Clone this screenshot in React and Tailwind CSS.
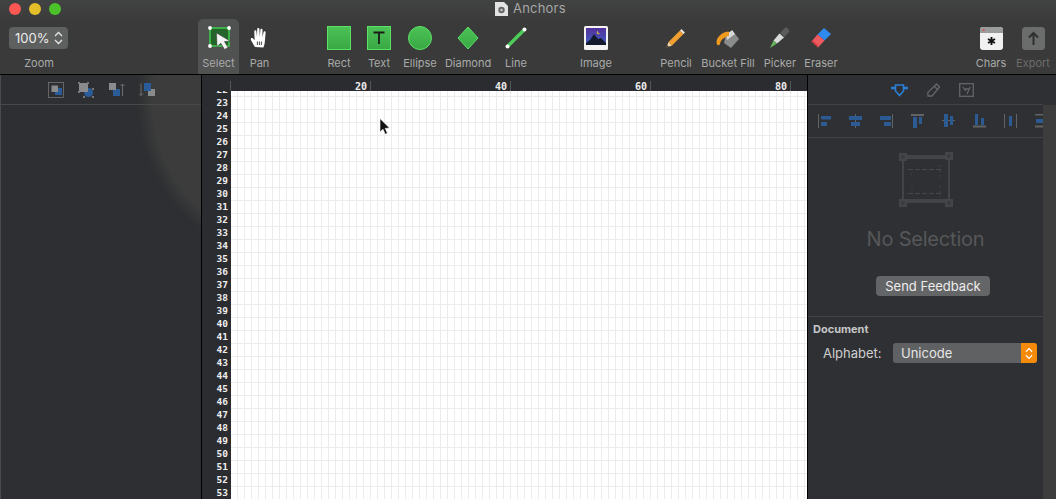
import React from "react";

const uiFont = "font-['Inter','Liberation_Sans',sans-serif]";
const monoFont = "font-['DejaVu_Sans_Mono',monospace]";

function Tool({ label, width, dim, active, children }) {
  return (
    <div className={`${width} h-[55px] shrink-0 flex flex-col items-center ${active ? "bg-[#505151] rounded-t-[5px]" : ""}`}>
      <div className="h-[38px] w-full flex items-center justify-center">{children}</div>
      <div className={`text-[11px] leading-[13px] whitespace-nowrap ${dim ? "text-[#6b6c6b]" : "text-[#a9aaa9]"}`}>{label}</div>
    </div>
  );
}

function SelectIcon() {
  return (
    <svg width="26" height="26" viewBox="0 0 26 26">
      <rect x="4" y="3" width="19" height="18" fill="#25652c" stroke="#3fc64c" strokeWidth="1.6" />
      <circle cx="4" cy="3" r="1.9" fill="#fff" />
      <circle cx="23" cy="3" r="1.9" fill="#fff" />
      <circle cx="4" cy="21" r="1.9" fill="#fff" />
      <path d="M10.5 8 L11 21.5 L14.8 18.2 L18.6 24.4 L22 22.4 L18.4 16.6 L24 16 Z" fill="#f4f4f4" stroke="#333" strokeWidth="0.5" />
    </svg>
  );
}

function HandIcon() {
  return (
    <svg width="20" height="22" viewBox="0 0 20 22">
      <path d="M5 20 C3.5 17.5 1.2 14 0.8 12.6 C0.4 11.3 2 10.4 3 11.4 L4.6 13.2 L4.3 4.4 C4.3 2.9 6.3 2.9 6.4 4.4 L7 10 L7.2 2 C7.2 0.5 9.4 0.5 9.4 2 L9.7 10 L10.4 2.8 C10.5 1.3 12.6 1.4 12.5 2.9 L12.4 10.4 L13.6 5 C13.9 3.7 15.8 4 15.6 5.4 L14.9 14 C14.7 16.5 14.4 18 13.4 20.5 Z" fill="#fff" />
      <path d="M7.4 14.5 V18 M9.4 14.5 V18 M11.4 14.5 V18" stroke="#333" strokeWidth="0.9" />
    </svg>
  );
}

function GreenFill({ id }) {
  return (
    <defs>
      <linearGradient id={id} x1="0" y1="0" x2="0" y2="1">
        <stop offset="0" stopColor="#4cc256" />
        <stop offset="1" stopColor="#38a844" />
      </linearGradient>
    </defs>
  );
}

function RectIcon() {
  return (
    <svg width="24" height="24" viewBox="0 0 24 24">
      <GreenFill id="green-rect" />
      <rect x="0.5" y="0.5" width="23" height="23" fill="url(#green-rect)" stroke="#5ce066" />
    </svg>
  );
}

function TextIcon() {
  return (
    <svg width="24" height="24" viewBox="0 0 24 24">
      <GreenFill id="green-text" />
      <rect x="0.5" y="0.5" width="23" height="23" fill="url(#green-text)" stroke="#5ce066" />
      <path d="M6.5 6.5 H17.5 M12 6.5 V18" stroke="#1b1b1b" strokeWidth="1.8" fill="none" />
    </svg>
  );
}

function EllipseIcon() {
  return (
    <svg width="24" height="24" viewBox="0 0 24 24">
      <GreenFill id="green-ellipse" />
      <circle cx="12" cy="12" r="11.5" fill="url(#green-ellipse)" stroke="#5ce066" />
    </svg>
  );
}

function DiamondIcon() {
  return (
    <svg width="22" height="24" viewBox="0 0 22 24">
      <GreenFill id="green-diamond" />
      <path d="M11 1 L21 12 L11 23 L1 12 Z" fill="url(#green-diamond)" stroke="#5ce066" strokeLinejoin="round" />
    </svg>
  );
}

function LineIcon() {
  return (
    <svg width="22" height="22" viewBox="0 0 22 22">
      <path d="M3 19 L19 3" stroke="#4ccc58" strokeWidth="3.4" />
      <circle cx="2.5" cy="19.5" r="2" fill="#fff" />
      <circle cx="19.5" cy="2.5" r="2" fill="#fff" />
    </svg>
  );
}

function ImageIcon() {
  return (
    <svg width="24" height="24" viewBox="0 0 24 24">
      <defs>
        <linearGradient id="night" x1="0" y1="0" x2="0" y2="1">
          <stop offset="0" stopColor="#53309a" />
          <stop offset="1" stopColor="#3f62c4" />
        </linearGradient>
      </defs>
      <rect width="24" height="24" rx="1.5" fill="#f4f4f4" />
      <rect x="2" y="2" width="20" height="17" fill="url(#night)" />
      <path d="M2 19 L2 17 L6 14 L10 8 L14 13 L17 12 L22 17 V19 Z" fill="#141a2e" />
      <path d="M14 5 A1.6 1.6 0 1 0 15.8 7.2 A1.8 1.8 0 0 1 14 5 Z" fill="#e3b440" />
    </svg>
  );
}

function PencilIcon() {
  return (
    <svg width="22" height="22" viewBox="0 0 22 22">
      <path d="M15 3.5 L18.5 7 L7 18.5 L3.5 15 Z" fill="#f0a030" />
      <path d="M15 3.5 L16.5 2 L20 5.5 L18.5 7 Z" fill="#ececec" />
      <path d="M16.5 2 L17.5 1 L21 4.5 L20 5.5 Z" fill="#444" />
      <path d="M3.5 15 L7 18.5 L1.5 20.5 Z" fill="#f2d2a0" />
      <path d="M1.5 20.5 L2.4 18.2 L3.8 19.4 Z" fill="#333" />
    </svg>
  );
}

function BucketIcon() {
  return (
    <svg width="24" height="22" viewBox="0 0 24 22">
      <path d="M10 7 L16 3 L23 12 L15 21 L8 16 Z" fill="#8a8b8b" />
      <path d="M10 7 L16 3 L19 7 L11 13 Z" fill="#d8d8d8" />
      <path d="M12 4 L18 2 L16 3 L10.5 7 Z" fill="#2a2a2a" />
      <path d="M13 4.5 C6 5 1 9.5 0.5 15 C0.5 19 3 19 4 17 C4.5 13 8 10 13 9 Z" fill="#ef9a1f" />
    </svg>
  );
}

function PickerIcon() {
  return (
    <svg width="22" height="22" viewBox="0 0 22 22">
      <path d="M16 0.8 C17.8 -0.2 21 3 20 5 L15.5 10 L11 6 Z" fill="#5a5b5c" />
      <path d="M10.5 6.5 L15 10.5 L8 16.5 L4.5 13.5 Z" fill="#d8dbda" />
      <path d="M4.5 13.5 L8 16.5 L1 21 Z" fill="#63b55a" />
    </svg>
  );
}

function EraserIcon() {
  return (
    <svg width="22" height="22" viewBox="0 0 22 22">
      <path d="M14 1 L21 7 L14.5 13.5 L7.5 7.5 Z" fill="#2f8af0" />
      <path d="M7.5 7.5 L14.5 13.5 L8 20.5 L1.5 14.5 Z" fill="#ef5a5e" />
      <path d="M1.5 14.5 L8 20.5 L8 18.5 L2 13 Z" fill="#c93a40" />
    </svg>
  );
}

function CharsIcon() {
  return (
    <svg width="23" height="23" viewBox="0 0 23 23">
      <rect width="23" height="23" rx="3" fill="#f1f1f1" />
      <path d="M0 3 a3 3 0 0 1 3 -3 h17 a3 3 0 0 1 3 3 v3 H0 Z" fill="#9a9b9b" />
      <circle cx="3.6" cy="3" r="1.1" fill="#d8504e" />
      <path d="M11.5 10 V18 M8 12 L15 16 M15 12 L8 16" stroke="#111" strokeWidth="1.9" />
    </svg>
  );
}

function ExportIcon() {
  return (
    <svg width="23" height="23" viewBox="0 0 23 23">
      <rect width="23" height="23" rx="3.5" fill="#6b6c6c" />
      <path d="M11.5 18 V6 M7 10.5 L11.5 6 L16 10.5" stroke="#2e2f2f" strokeWidth="2" fill="none" />
    </svg>
  );
}

function Updown({ color = "#e6e6e6", size = 12 }) {
  return (
    <svg width={size - 3} height={size + 2} viewBox="0 0 9 14" fill="none" stroke={color} strokeWidth="1.3">
      <path d="M1 5 L4.5 1.5 L8 5 M1 9 L4.5 12.5 L8 9" />
    </svg>
  );
}

function ArrangeIcons() {
  return (
    <div className="flex items-center justify-center gap-[14px] h-[29px]">
      <svg width="16" height="16" viewBox="0 0 16 16">
        <rect x="0.5" y="0.5" width="15" height="15" fill="none" stroke="#7b7c7d" strokeWidth="0.7" />
        <rect x="7" y="6" width="7" height="7" fill="#2a5c9a" />
        <rect x="3.5" y="3.5" width="6.5" height="6.5" fill="#8a8b8c" />
      </svg>
      <svg width="16" height="16" viewBox="0 0 16 16">
        <circle cx="10.5" cy="10.5" r="4.5" fill="#2a5c9a" />
        <rect x="1" y="1" width="9" height="9" fill="#8a8b8c" />
        <path d="M0 0 H2 V2 H0 Z M9 0 H11 V2 H9 Z M0 9 H2 V11 H0 Z M14 6 H16 V8 H14 Z M14 14 H16 V16 H14 Z M5 14 H7 V16 H5 Z" fill="#77787a" />
      </svg>
      <svg width="16" height="16" viewBox="0 0 16 16" className="ml-[1px]">
        <rect x="4" y="7" width="7" height="7" fill="#2a5c9a" />
        <rect x="0" y="1" width="7" height="7" fill="#8a8b8c" />
        <path d="M13.5 14 V2 M11.5 4 L13.5 2 L15.5 4" stroke="#6b6c6d" fill="none" />
      </svg>
      <svg width="16" height="16" viewBox="0 0 16 16">
        <path d="M2 1.5 V13.5 M0 11.5 L2 13.5 L4 11.5" stroke="#6b6c6d" fill="none" />
        <rect x="9" y="7" width="7" height="7" fill="#8a8b8c" />
        <rect x="5" y="1" width="7" height="8" fill="#2a5c9a" />
      </svg>
    </div>
  );
}

// bars first, then the guide line
const alignIcons = [
  ["M3 2 H13 V5.5 H3 Z M3 8 H9 V12 H3 Z", "M0.5 0 V14", 1],
  ["M0 2 H13 V6 H0 Z M2 8 H11 V12 H2 Z", "M6.5 0 V14", 1],
  ["M0 2 H11 V6 H0 Z M4 8 H11 V12 H4 Z", "M12.5 0 V14", 1],
  ["M2 3 H6 V14 H2 Z M8 3 H11 V10 H8 Z", "M0 1 H13", 2],
  ["M2 0 H6 V13 H2 Z M8 2 H11 V11 H8 Z", "M0 6.5 H13", 1],
  ["M2 0 H5 V11 H2 Z M8 4 H11 V11 H8 Z", "M0 12.5 H13", 2],
  ["M5 2 H8 V12 H5 Z", "M0.5 0 V14 M12.5 0 V14", 1],
  ["M1 5 H14 V9 H1 Z", "M0 0.5 H14 M0 12.5 H14", 2],
];

function AlignRow() {
  return (
    <div className="h-[33px] flex items-center pl-[10px] gap-[17px] overflow-hidden border-b border-[#424346]">
      {alignIcons.map(([bars, guide, sw], i) => (
        <svg key={i} width="14" height="14" viewBox="0 0 14 14" className="shrink-0">
          <path d={guide} stroke="#626365" strokeWidth={sw} fill="none" />
          <path d={bars} fill="#2c5a93" />
        </svg>
      ))}
    </div>
  );
}

function NoSelectionIcon() {
  return (
    <svg width="54" height="56" viewBox="0 0 54 56" fill="none" className="ml-[1px]">
      <path d="M8 5 H46 M8 49 H46" stroke="#424447" strokeWidth="4" />
      <path d="M4 8 V48 M50 8 V48" stroke="#424447" strokeWidth="2" />
      <rect x="0" y="1" width="8" height="8" fill="#434548" />
      <rect x="46" y="0" width="8" height="8" fill="#434548" />
      <rect x="0" y="47" width="8" height="8" fill="#434548" />
      <rect x="46" y="47" width="8" height="8" fill="#434548" />
      <rect x="2.5" y="3.5" width="3" height="3" fill="#36383a" />
      <rect x="48.5" y="2.5" width="3" height="3" fill="#36383a" />
      <rect x="2.5" y="49.5" width="3" height="3" fill="#36383a" />
      <rect x="48.5" y="49.5" width="3" height="3" fill="#36383a" />
      <path d="M9 17.5 H44 M9 41.5 H44" stroke="#45474a" strokeDasharray="5 2" />
      <path d="M12 21 V24 M41 13 V26 M41 34 V45 M13 34 V37" stroke="#404245" strokeDasharray="2 3" />
    </svg>
  );
}

const rowNumbers = Array.from({ length: 32 }, (_, i) => i + 22);

export default function App() {
  return (
    <div className={`${uiFont} relative w-[1056px] h-[499px] overflow-hidden flex flex-col bg-[#2f3033]`}>
      {/* title bar + toolbar */}
      <div className="h-[75px] shrink-0 border-b border-black bg-[linear-gradient(#414342,#3a3a3a_30%,#3a3a3a)] flex flex-col">
        <div className="h-[19px] flex items-center relative">
          <div className="flex gap-[8px] pl-[9px] mt-[-2px]">
            <div className="w-[12px] h-[12px] rounded-full bg-[#fc5753]" />
            <div className="w-[12px] h-[12px] rounded-full bg-[#e5bf29]" />
            <div className="w-[12px] h-[12px] rounded-full bg-[#4cc22a]" />
          </div>
          <div className="absolute left-[495px] top-0 h-[17px] flex items-center gap-[5px]">
            <svg width="13" height="15" viewBox="0 0 13 15">
              <path d="M0 1 H9 L13 5 V15 H0 Z" fill="#e2e2e2" />
              <circle cx="6.5" cy="9" r="3.2" fill="#666" />
              <circle cx="6.5" cy="9" r="1.2" fill="#ccc" />
            </svg>
            <span className="text-[13px] leading-none tracking-[0.2px] text-[#a6a7a6]">Anchors</span>
          </div>
        </div>
        <div className="flex items-start h-[55px]">
          <div className="w-[78px] h-[55px] shrink-0 flex flex-col items-center">
            <div className="mt-[8px] self-start ml-[9px] w-[59px] h-[22px] rounded-[4px] bg-[#5e5f5f] flex items-center justify-between pl-[6px] pr-[5px]">
              <span className="text-[13px] leading-none text-[#ececec]">100%</span>
              <Updown />
            </div>
            <div className="mt-[8px] text-[11px] leading-[13px] text-[#a9aaa9]">Zoom</div>
          </div>
          <div className="w-[120px] shrink-0" />
          <Tool label="Select" width="w-[41px]" active><SelectIcon /></Tool>
          <Tool label="Pan" width="w-[41px]"><HandIcon /></Tool>
          <div className="w-[39px] shrink-0" />
          <Tool label="Rect" width="w-[40px]"><RectIcon /></Tool>
          <Tool label="Text" width="w-[40px]"><TextIcon /></Tool>
          <Tool label="Ellipse" width="w-[42px]"><EllipseIcon /></Tool>
          <Tool label="Diamond" width="w-[54px]"><DiamondIcon /></Tool>
          <Tool label="Line" width="w-[42px]"><LineIcon /></Tool>
          <div className="w-[39px] shrink-0" />
          <Tool label="Image" width="w-[40px]"><ImageIcon /></Tool>
          <div className="w-[40px] shrink-0" />
          <Tool label="Pencil" width="w-[40px]"><PencilIcon /></Tool>
          <Tool label="Bucket Fill" width="w-[64px]"><BucketIcon /></Tool>
          <Tool label="Picker" width="w-[40px]"><PickerIcon /></Tool>
          <Tool label="Eraser" width="w-[42px]"><EraserIcon /></Tool>
          <div className="w-[129px] shrink-0" />
          <Tool label="Chars" width="w-[40px]"><CharsIcon /></Tool>
          <div className="w-[2px] shrink-0" />
          <Tool label="Export" width="w-[40px]" dim><ExportIcon /></Tool>
        </div>
      </div>

      <div className="flex-1 flex min-h-0">
        {/* left panel */}
        <div className="w-[202px] shrink-0 border-r border-l border-r-black border-l-[#4a4b4c] bg-[#2c2e31] bg-[radial-gradient(circle_at_300px_25px,#3b3c3b_0,#3b3c3b_148px,#2d2f32_164px)] flex flex-col">
          <div className="h-[30px] border-b border-[#48494b]">
            <ArrangeIcons />
          </div>
        </div>

        {/* canvas with rulers */}
        <div className="w-[606px] shrink-0 flex flex-col min-w-0 border-r border-black">
          <div className={`${monoFont} h-[16px] shrink-0 flex items-end bg-[#2b2c30] text-[10px] font-bold text-[#eeeeee]`}>
            <div className="w-[29px] h-[10px] shrink-0 border-r border-[#55565a]" />
            {["20", "40", "60", "80"].map((n) => (
              <div key={n} className="w-[140px] h-[10px] shrink-0 border-r border-[#55565a] flex items-center justify-end pr-[3px]">
                {n}
              </div>
            ))}
          </div>
          <div className="flex-1 flex min-h-0">
            <div className={`${monoFont} w-[29px] shrink-0 overflow-hidden bg-[#2b2c30] text-[9.5px] font-bold text-[#eeeeee]`}>
              <div className="mt-[-8px]">
                {rowNumbers.map((n) => (
                  <div key={n} className="h-[13px] leading-[13px] text-right pr-[3px]">{n}</div>
                ))}
              </div>
            </div>
            <div className="flex-1 bg-white bg-[linear-gradient(#ececec_1px,transparent_1px),linear-gradient(90deg,#ececec_1px,transparent_1px)] bg-[size:7px_13px] bg-[position:6px_5px]" />
          </div>
        </div>

        {/* right panel */}
        <div className="flex-1 flex min-w-0">
          <div className="w-[235px] shrink-0 flex flex-col">
            <div className="h-[30px] shrink-0 border-b border-[#424346] flex items-center gap-[19px] pl-[83px]">
              <svg width="17" height="14" viewBox="0 0 17 14" fill="none" stroke="#2a7fd6" strokeWidth="1.6">
                <path d="M4.5 2 H12.5 V8 L8.5 12.5 L4.5 8 Z" />
                <path d="M0 5 H4.5 M12.5 5 H17" strokeWidth="2.4" />
              </svg>
              <svg width="13" height="14" viewBox="0 0 13 14" fill="none" stroke="#646567" strokeWidth="1.3">
                <path d="M9.5 1 L12.5 4 L5 13 L1 13 L0.8 9.5 Z M7.5 3.5 L10.5 6.5" />
              </svg>
              <svg width="15" height="14" viewBox="0 0 15 14" fill="none" stroke="#646567" strokeWidth="1.3">
                <rect x="0.7" y="0.7" width="13.6" height="12.6" />
                <path d="M4 4 L6.5 8 M11 4 L8 11 M6 6 H10" />
              </svg>
            </div>
            <AlignRow />
            <div className="h-[179px] shrink-0 border-b border-[#424346] flex flex-col items-center pt-[14px]">
              <NoSelectionIcon />
              <div className="mt-[19px] text-[20px] leading-[24px] text-[#565759] tracking-[-0.2px]">No Selection</div>
              <div className="mt-[25px] w-[114px] h-[20px] rounded-[4px] bg-[#646567] flex items-center justify-center text-[13px] leading-none text-[#ececec] ml-[15px]">
                Send Feedback
              </div>
            </div>
            <div className="pl-[5px] pt-[6px]">
              <div className="text-[11px] leading-[13px] font-bold text-[#c6c6c7]">Document</div>
              <div className="mt-[7px] flex items-center pl-[10px]">
                <span className="w-[70px] text-[13px] leading-none text-[#cfcfd0]">Alphabet:</span>
                <div className="w-[144px] h-[20px] rounded-[3px] bg-[#606163] flex items-center justify-between overflow-hidden pl-[8px]">
                  <span className="text-[13px] leading-none text-[#e6e6e6]">Unicode</span>
                  <div className="w-[16px] h-full bg-[#f58a0b] flex items-center justify-center">
                    <Updown color="#fff" size={11} />
                  </div>
                </div>
              </div>
            </div>
          </div>
          <div className="flex-1 flex flex-col">
            <div className="h-[30px] shrink-0" />
            <div className="flex-1 bg-[#3c3d3c]" />
          </div>
        </div>
      </div>

      {/* mouse pointer */}
      <svg width="12" height="18" viewBox="0 0 12 18" className="absolute left-[379px] top-[118px]">
        <path d="M1 0.5 V14 L4 11.2 L6.2 16.2 L8.4 15.2 L6.2 10.4 L10.5 10 Z" fill="#111" stroke="#fff" strokeWidth="0.6" />
      </svg>
    </div>
  );
}
